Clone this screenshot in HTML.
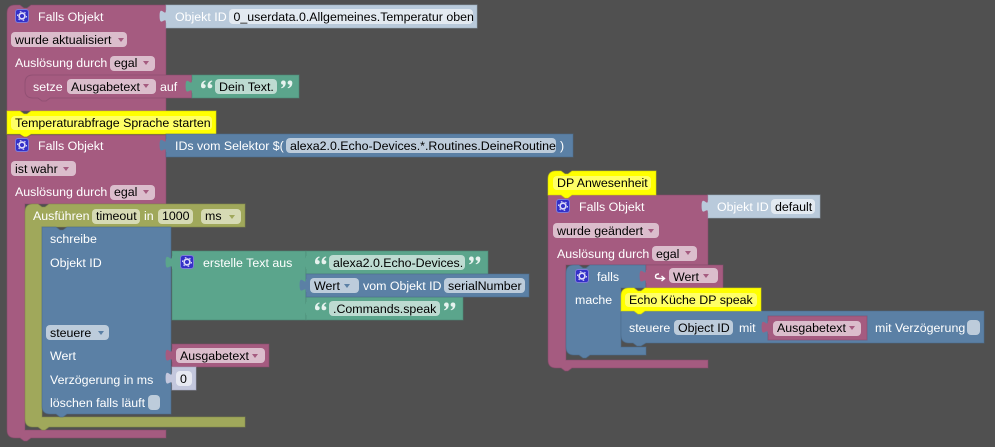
<!DOCTYPE html>
<html><head><meta charset="utf-8"><style>
html,body{margin:0;padding:0;background:#505050;width:995px;height:447px;overflow:hidden}
svg{display:block}
text{font-family:"Liberation Sans",Arial,sans-serif;font-size:12.4px;white-space:pre}
.w{fill:#fff}.k{fill:#000}
.p{fill:#A55B80;stroke:#84496a;stroke-width:1;stroke-opacity:.55}
.b{fill:#5B80A5;stroke:#4a6a8a;stroke-width:1;stroke-opacity:.55}
.g{fill:#5BA58C;stroke:#4a8672;stroke-width:1;stroke-opacity:.55}
.o{fill:#A0A85B;stroke:#858c4a;stroke-width:1;stroke-opacity:.55}
.l{fill:#B9CADB;stroke:#9aabbc;stroke-width:1;stroke-opacity:.55}
.y{fill:#FFFF00;stroke:#d8d800;stroke-width:1;stroke-opacity:.55}
.c{fill:#C3C7DD;stroke:#a8acc4;stroke-width:1;stroke-opacity:.55}
.fp{fill:#DBBDCC}.fb{fill:#BDCCDB}.fg{fill:#BDDBD1}.fo{fill:#D6DAB4}.fl{fill:#E3EAF1}.fc{fill:#E7E9F2}.fy{fill:#FFFF66}
</style></head><body>
<svg width="995" height="447" viewBox="0 0 995 447" xmlns="http://www.w3.org/2000/svg">
<defs>
<path id="tab" d="M1 0H0C0 8-6.400-6.400-6.400 6S0 5 0 13H1Z"/>
<g id="gear"><rect x=".5" y=".5" width="13" height="13" rx="2.500" fill="#3430c8" stroke="#7f7cd8"/><circle cx="7" cy="7" r="2.900" fill="none" stroke="#dcdaf8" stroke-width="1.700"/><circle cx="7" cy="7" r="4.500" fill="none" stroke="#dcdaf8" stroke-width="1" stroke-dasharray="1.600 3.100"/></g>
<g id="qo" fill="#e6f2ee"><g transform="scale(1.1 1.2)"><path d="M4 0C1 .5 0 2.500 0 4.500 0 6 1 6.500 2.200 6.500 3.500 6.500 4.300 5.600 4.300 4.600 4.300 3.500 3.300 3 2.300 3 2.400 1.800 3.200 1 4.300.8Z"/><path d="M10 0C7 .5 6 2.500 6 4.500 6 6 7 6.500 8.200 6.500 9.500 6.500 10.300 5.600 10.300 4.600 10.300 3.500 9.300 3 8.300 3 8.400 1.800 9.200 1 10.300.8Z"/></g></g>
<g id="qc" fill="#e6f2ee"><g transform="scale(1.1 1.2)"><path d="M.3 6.500C3.300 6 4.300 4 4.300 2 4.300.5 3.300 0 2.100 0 .8 0 0 .9 0 1.900 0 3 1 3.500 2 3.500 1.900 4.700 1.100 5.500 0 5.700Z"/><path d="M6.300 6.500C9.300 6 10.300 4 10.300 2 10.300.5 9.300 0 8.100 0 6.800 0 6 .9 6 1.900 6 3 7 3.500 8 3.500 7.900 4.700 7.100 5.500 6 5.700Z"/></g></g>
</defs>
<rect width="995" height="447" fill="#505050"/>

<!-- Group 1: top block -->
<path class="p" d="M7 13Q7 5 15 5H20L24 8H27L31 5H166V111H7Z"/>
<path class="l" d="M166 5H477V28H166Z"/>
<use href="#tab" x="166" y="10" fill="#B9CADB"/>
<use href="#gear" x="15" y="9"/>
<text class="w" x="38" y="21">Falls Objekt</text>
<text class="w" x="175" y="21">Objekt ID</text>
<rect class="fl" x="229" y="9" width="244" height="15" rx="4"/>
<text class="k" x="233.500" y="21">0_userdata.0.Allgemeines.Temperatur oben</text>
<rect class="fp" x="11" y="32" width="116" height="15" rx="4"/>
<text class="k" x="15" y="44">wurde aktualisiert</text>
<path d="M118 38h6l-3 4z" fill="#A55B80"/>
<text class="w" x="15" y="67">Auslösung durch</text>
<rect class="fp" x="110" y="56" width="45" height="15" rx="4"/>
<text class="k" x="114" y="67">egal</text>
<path d="M143 61h6l-3 4z" fill="#A55B80"/>
<!-- setze -->
<path class="p" d="M33 75H192V98H50L46 101H42L38 98H33Q25 98 25 90V83Q25 75 33 75Z"/>
<text class="w" x="33" y="91">setze</text>
<rect class="fp" x="67" y="79" width="89" height="15" rx="4"/>
<text class="k" x="71" y="91">Ausgabetext</text>
<path d="M143 84h6l-3 4z" fill="#A55B80"/>
<text class="w" x="160" y="91">auf</text>
<path class="g" d="M192 75H299V98H192Z"/>
<use href="#tab" x="192" y="80" fill="#5BA58C"/>
<use href="#qo" x="201" y="80.500"/>
<rect class="fg" x="215" y="79" width="62" height="15" rx="4"/>
<text class="k" x="219" y="91">Dein Text.</text>
<use href="#qc" x="281" y="80.500"/>

<!-- Comment 1 + block 2 -->
<path class="y" d="M7 111H20L24 114H27L31 111H216V134H31L27 137H24L20 134H7Z"/>
<rect class="fy" x="11" y="116" width="201" height="14" rx="4"/>
<text class="k" x="15" y="127">Temperaturabfrage Sprache starten</text>

<path class="p" d="M7 135H20L24 137H27L31 135H166V204H25V430H166V438H31L27 441H24L20 438H15Q7 438 7 430Z"/>
<path class="b" d="M166 134H573V157H166Z"/>
<use href="#tab" x="166" y="139" fill="#5B80A5"/>
<use href="#gear" x="15" y="138"/>
<text class="w" x="38" y="150">Falls Objekt</text>
<text class="w" x="175" y="150">IDs vom Selektor $(</text>
<rect class="fb" x="286" y="138" width="270" height="15" rx="4"/>
<text class="k" x="290" y="150">alexa2.0.Echo-Devices.*.Routines.DeineRoutine</text>
<text class="w" x="560" y="150">)</text>
<rect class="fp" x="11" y="161" width="65" height="15" rx="4"/>
<text class="k" x="15" y="173">ist wahr</text>
<path d="M63 167h6l-3 4z" fill="#A55B80"/>
<text class="w" x="15" y="196">Auslösung durch</text>
<rect class="fp" x="110" y="185" width="45" height="15" rx="4"/>
<text class="k" x="114" y="196">egal</text>
<path d="M143 190h6l-3 4z" fill="#A55B80"/>

<!-- Olive timeout -->
<path class="o" d="M33 204H38L42 207H45L49 204H245V227H42V417H245V427H49L45 430H42L38 427H33Q25 427 25 419V212Q25 204 33 204Z"/>
<text class="w" x="33" y="220">Ausführen</text>
<rect class="fo" x="92" y="209" width="48" height="15" rx="4"/>
<text class="k" x="96" y="220">timeout</text>
<text class="w" x="144" y="220">in</text>
<rect class="fo" x="158" y="209" width="35" height="15" rx="4"/>
<text class="k" x="162" y="220">1000</text>
<rect class="fo" x="201" y="209" width="40" height="15" rx="4"/>
<text class="k" x="205" y="220">ms</text>
<path d="M229 215h6l-3 4z" fill="#A0A85B"/>

<!-- Blue schreibe -->
<path class="b" d="M42 227H56L60 230H63L67 227H171V414H67L63 417H60L56 414H50Q42 414 42 406Z"/>
<text class="w" x="50" y="243">schreibe</text>
<text class="w" x="50" y="267">Objekt ID</text>
<path class="g" d="M172 251H306V320H172Z"/>
<use href="#tab" x="172" y="256" fill="#5BA58C"/>
<use href="#gear" x="180" y="255"/>
<text class="w" x="203" y="267">erstelle Text aus</text>
<path class="g" d="M306 251H488V274H306Z"/>
<use href="#tab" x="306" y="256" fill="#5BA58C"/>
<use href="#qo" x="315" y="256.500"/>
<rect class="fg" x="329" y="255" width="136" height="15" rx="4"/>
<text class="k" x="333" y="267">alexa2.0.Echo-Devices.</text>
<use href="#qc" x="469" y="256.500"/>
<path class="g" d="M306 297H463V320H306Z"/>
<use href="#tab" x="306" y="302" fill="#5BA58C"/>
<use href="#qo" x="315" y="302.500"/>
<rect class="fg" x="329" y="301" width="111" height="15" rx="4"/>
<text class="k" x="333" y="313">.Commands.speak</text>
<use href="#qc" x="444" y="302.500"/>
<path class="b" d="M306 274H529V297H306Z"/>
<use href="#tab" x="306" y="279" fill="#5B80A5"/>
<rect class="fb" x="310" y="278" width="49" height="15" rx="4"/>
<text class="k" x="314" y="290">Wert</text>
<path d="M344 284h6l-3 4z" fill="#5B80A5"/>
<text class="w" x="363" y="290">vom Objekt ID</text>
<rect class="fb" x="444" y="278" width="81" height="15" rx="4"/>
<text class="k" x="448" y="290">serialNumber</text>

<rect class="fb" x="46" y="325" width="63" height="15" rx="4"/>
<text class="k" x="50" y="337">steuere</text>
<path d="M98 331h6l-3 4z" fill="#5B80A5"/>
<text class="w" x="50" y="360">Wert</text>
<path class="p" d="M172 344H269V367H172Z"/>
<use href="#tab" x="172" y="349" fill="#A55B80"/>
<rect class="fp" x="176" y="348" width="89" height="15" rx="4"/>
<text class="k" x="180" y="360">Ausgabetext</text>
<path d="M252 354h6l-3 4z" fill="#A55B80"/>
<text class="w" x="50" y="384">Verzögerung in ms</text>
<path class="c" d="M172 367H196V390H172Z"/>
<use href="#tab" x="172" y="372" fill="#C3C7DD"/>
<rect class="fc" x="176" y="371" width="16" height="15" rx="4"/>
<text class="k" x="180" y="383">0</text>
<text class="w" x="50" y="407">löschen falls läuft</text>
<rect class="fb" x="148" y="395" width="12" height="15" rx="4"/>

<!-- Group 2 -->
<path class="p" d="M548 195H561L565 198H568L572 195H708V265H566V360H708V368H572L568 371H565L561 368H556Q548 368 548 360Z"/>
<path class="y" d="M548 179Q548 171 556 171H561L565 174H568L572 171H656V195H572L568 198H565L561 195H548Z"/>
<rect class="fy" x="553" y="176" width="98" height="14" rx="4"/>
<text class="k" x="557" y="187">DP Anwesenheit</text>
<path class="l" d="M708 195H820V218H708Z"/>
<use href="#tab" x="708" y="200" fill="#B9CADB"/>
<use href="#gear" x="556" y="199"/>
<text class="w" x="579" y="211">Falls Objekt</text>
<text class="w" x="717" y="211">Objekt ID</text>
<rect class="fl" x="771" y="199" width="44" height="15" rx="4"/>
<text class="k" x="775" y="211">default</text>
<rect class="fp" x="553" y="223" width="106" height="15" rx="4"/>
<text class="k" x="557" y="235">wurde geändert</text>
<path d="M648 229h6l-3 4z" fill="#A55B80"/>
<text class="w" x="557" y="258">Auslösung durch</text>
<rect class="fp" x="652" y="246" width="45" height="15" rx="4"/>
<text class="k" x="656" y="258">egal</text>
<path d="M685 251h6l-3 4z" fill="#A55B80"/>

<path class="b" d="M574 265H579L583 268H586L590 265H646V288H621V347H646V355H590L586 358H583L579 355H574Q566 355 566 347V273Q566 265 574 265Z"/>
<path class="p" d="M646 265H723V288H646Z"/>
<use href="#tab" x="646" y="270" fill="#A55B80"/>
<path d="M659 274Q655.500 274 655.500 276.500 655.500 278.500 658 278.500H664M661.500 276L664.500 278.500 661.500 281" fill="none" stroke="#fff" stroke-width="1.400"/>
<rect class="fp" x="669" y="268" width="49" height="15" rx="4"/>
<text class="k" x="673" y="281">Wert</text>
<path d="M703 274h6l-3 4z" fill="#A55B80"/>
<use href="#gear" x="575" y="269"/>
<text class="w" x="597" y="281">falls</text>
<text class="w" x="575" y="304">mache</text>

<path class="b" d="M621 311H984V343H646L641 346H637L633 343H629Q621 343 621 335Z"/>
<path class="y" d="M629 288H634L638 291H641L645 288H761V311H645L641 314H638L634 311H621V296Q621 288 629 288Z"/>
<rect class="fy" x="625" y="293" width="132" height="14" rx="4"/>
<text class="k" x="629" y="304">Echo Küche DP speak</text>
<text class="w" x="629" y="332">steuere</text>
<rect class="fb" x="674" y="320" width="59" height="15" rx="4"/>
<text class="k" x="678" y="332">Object ID</text>
<text class="w" x="739" y="332">mit</text>
<path class="p" d="M768 316H867V340H768Z"/>
<use href="#tab" x="768" y="321" fill="#A55B80"/>
<rect class="fp" x="773" y="321" width="88" height="15" rx="4"/>
<text class="k" x="777" y="332">Ausgabetext</text>
<path d="M849 326h6l-3 4z" fill="#A55B80"/>
<text class="w" x="875" y="332">mit Verzögerung</text>
<rect class="fb" x="967" y="320" width="13" height="15" rx="4"/>
</svg>
</body></html>
